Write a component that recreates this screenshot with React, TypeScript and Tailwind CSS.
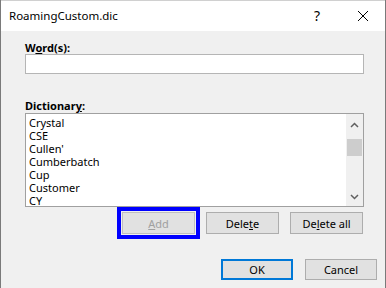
import React from 'react'

const words = ['Crystal', 'CSE', "Cullen'", 'Cumberbatch', 'Cup', 'Customer', 'CY']

function Btn({
  children,
  className = '',
}: {
  children: React.ReactNode
  className?: string
}) {
  return (
    <div
      className={`flex items-center justify-center border bg-[#e1e1e1] text-[11px] leading-none ${className}`}
    >
      {children}
    </div>
  )
}

export default function App() {
  return (
    <div
      className="flex h-[288px] w-[386px] flex-col overflow-hidden border-x border-[#7a7a7a] bg-[#f0f0f0] text-black"
      style={{ fontFamily: '"Noto Sans", "Open Sans", sans-serif' }}
    >
      {/* title bar */}
      <div className="flex h-[31px] items-center border-t border-[#d0d0d0] bg-white">
        <span className="ml-[8px] text-[11.5px]">RoamingCustom.dic</span>
        <span className="ml-auto mr-[37px] text-[14px] leading-none">?</span>
        <svg width="12" height="12" viewBox="0 0 12 12" className="mr-[16px]">
          <path d="M1 1L11 11M11 1L1 11" stroke="#000" strokeWidth="1" />
        </svg>
      </div>

      <div className="flex flex-col pl-[24px]">
        <div className="mt-[9px] h-[14px] text-[11px] font-bold leading-[15px]">
          W<span className="underline">o</span>rd(s):
        </div>
        <div className="h-[20px] w-[339px] border border-[#b5b5b5] bg-white" />

        <div className="mt-[24px] h-[14px] text-[11px] font-bold leading-[16px]">
          Dictionar<span className="underline">y</span>:
        </div>
        <div className="mt-[1px] flex h-[94px] w-[339px] border border-[#a0a0a0] bg-white">
          <div className="flex flex-1 flex-col pl-[3px] pt-[2px]">
            {words.map((w) => (
              <div key={w} className="h-[13px] text-[11px] leading-[13px]">
                {w}
              </div>
            ))}
          </div>
          <div className="flex w-[17px] flex-col items-center bg-[#f0f0f0]">
            <svg width="9" height="6" viewBox="0 0 9 6" className="mt-[8px]">
              <path d="M1 5L4.5 1.5L8 5" stroke="#606060" strokeWidth="1.5" fill="none" />
            </svg>
            <div className="mt-[11px] h-[17px] w-[15px] bg-[#cdcdcd]" />
            <svg width="9" height="6" viewBox="0 0 9 6" className="mt-auto mb-[6px]">
              <path d="M1 1L4.5 4.5L8 1" stroke="#606060" strokeWidth="1.5" fill="none" />
            </svg>
          </div>
        </div>

        <div className="mt-[5px] flex gap-[11px] pl-[97px]">
          <Btn className="h-[22px] w-[73px] border-[#bfbfbf] text-[#a0a0a0] outline outline-4 outline-offset-1 outline-[#0000ff]">
            <span className="underline">A</span>dd
          </Btn>
          <Btn className="h-[22px] w-[73px] border-[#adadad]">
            Dele<span className="underline">t</span>e
          </Btn>
          <Btn className="h-[22px] w-[73px] border-[#adadad]">
            De<span className="underline">l</span>ete all
          </Btn>
        </div>
      </div>

      <div className="mt-[25px] flex gap-[12px] pl-[220px]">
        <Btn className="h-[21px] w-[72px] border-2 border-[#0078d7]">OK</Btn>
        <Btn className="h-[21px] w-[72px] border-[#adadad]">Cancel</Btn>
      </div>
    </div>
  )
}
